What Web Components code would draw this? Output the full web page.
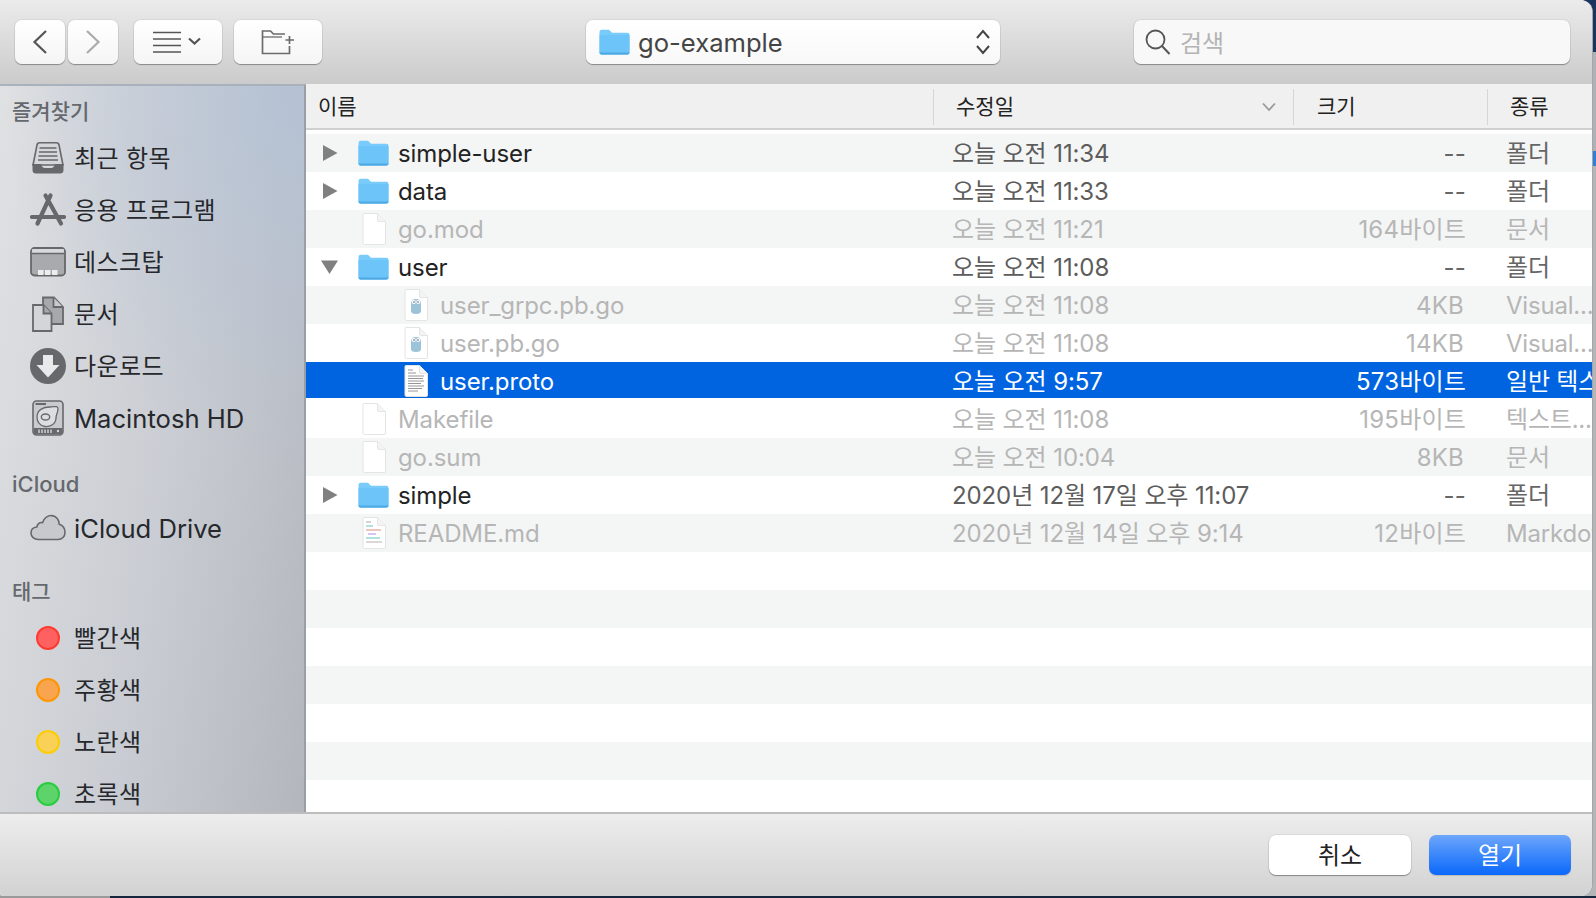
<!DOCTYPE html>
<html lang="ko">
<head>
<meta charset="utf-8">
<title>go-example</title>
<style>
    html, body { margin: 0; height: 100%; overflow: hidden; }
    body {
        font-family: Inter, "Noto Sans CJK KR", sans-serif;
        background:
            linear-gradient(to right, #9a9a9a 110px, #16263d 110px) left bottom / 100% 2px no-repeat,
            linear-gradient(to bottom, #1a3560 52px, #aeb1b5 52px, #aeb1b5 151px, #2f7fd8 151px, #2f7fd8 166px, #b4b5b7 166px);
    }
</style>
</head>
<body>
<file-dialog>
    <dialog-toolbar slot="toolbar"></dialog-toolbar>
    <side-bar slot="side">
        <side-heading style="margin-bottom:6px">즐겨찾기</side-heading>
        <side-item icon="recents">최근 항목</side-item>
        <side-item icon="apps">응용 프로그램</side-item>
        <side-item icon="desktop">데스크탑</side-item>
        <side-item icon="docs">문서</side-item>
        <side-item icon="download">다운로드</side-item>
        <side-item icon="disk" style="font-size:25.6px;letter-spacing:0;--label-pad:0px">Macintosh HD</side-item>
        <side-heading style="margin-top:26px;margin-bottom:5px;font-size:22px">iCloud</side-heading>
        <side-item icon="cloud" style="font-size:25.6px;letter-spacing:0;--label-pad:2px">iCloud Drive</side-item>
        <side-heading style="margin-top:23px;margin-bottom:6px">태그</side-heading>
        <side-item dot="#ff6060" ring="#ff3b30">빨간색</side-item>
        <side-item dot="#f9a54f" ring="#ff9500">주황색</side-item>
        <side-item dot="#f9d157" ring="#ffcc00">노란색</side-item>
        <side-item dot="#5dd36a" ring="#28cd41">초록색</side-item>
    </side-bar>
    <file-list slot="list">
        <file-row arrow="right" icon="folder" date="오늘 오전 11:34" size="--" kind="폴더">simple-user</file-row>
        <file-row arrow="right" icon="folder" date="오늘 오전 11:33" size="--" kind="폴더">data</file-row>
        <file-row dim icon="blank" date="오늘 오전 11:21" size="164바이트" kind="문서">go.mod</file-row>
        <file-row arrow="down" icon="folder" date="오늘 오전 11:08" size="--" kind="폴더">user</file-row>
        <file-row dim level="2" icon="gopher" date="오늘 오전 11:08" size="4KB" kind="Visual...">user_grpc.pb.go</file-row>
        <file-row dim level="2" icon="gopher" date="오늘 오전 11:08" size="14KB" kind="Visual...">user.pb.go</file-row>
        <file-row selected level="2" icon="text" date="오늘 오전 9:57" size="573바이트" kind="일반 텍스트 문서">user.proto</file-row>
        <file-row dim icon="blank" date="오늘 오전 11:08" size="195바이트" kind="텍스트....">Makefile</file-row>
        <file-row dim icon="blank" date="오늘 오전 10:04" size="8KB" kind="문서">go.sum</file-row>
        <file-row arrow="right" icon="folder" date="2020년 12월 17일 오후 11:07" size="--" kind="폴더">simple</file-row>
        <file-row dim icon="readme" date="2020년 12월 14일 오후 9:14" size="12바이트" kind="Markdown">README.md</file-row>
        <file-row></file-row><file-row></file-row><file-row></file-row><file-row></file-row>
        <file-row></file-row><file-row></file-row><file-row></file-row>
    </file-list>
    <dialog-footer slot="footer"></dialog-footer>
</file-dialog>

<script>
const FOLDER_SVG = `
    <svg width="31" height="26" viewBox="0 0 31 26">
        <path d="M.5 3Q.5 .8 2.8 .8H10L13 3.8H28.5Q30.5 3.8 30.5 6V23.5Q30.5 25.6 28.5 25.6H2.5Q.5 25.6 .5 23.5Z" fill="#78cbfa"/>
        <path d="M.5 6H30.5V23.5Q30.5 25.6 28.5 25.6H2.5Q.5 25.6 .5 23.5Z" fill="#6cc4f9"/>
        <path d="M.5 23.6H30.5Q30.5 25.6 28.5 25.6H2.5Q.5 25.6 .5 23.6Z" fill="#4ea8e2"/>
    </svg>`;

// blank page shape, the variants below only add something on top of it
const pageSvg = (inner = '') => `
    <svg width="24" height="32" viewBox="0 0 24 32">
        <path d="M1 1.5Q1 .5 2 .5H15.5L23.5 8.5V30Q23.5 31.5 22 31.5H2.5Q1 31.5 1 30Z" fill="#fff" stroke="#e4e4e4"/>
        <path d="M15.5 .5V7Q15.5 8.5 17 8.5H23.5" fill="#f4f4f4" stroke="#e4e4e4"/>
        ${inner}
    </svg>`;

const FILE_ICONS = {
    folder: FOLDER_SVG,
    blank: pageSvg(),
    gopher: pageSvg(`
        <path d="M7 15Q7 10 12 10Q17 10 17 15V22Q17 25 12 25Q7 25 7 22Z" fill="#9cc3d8"/>
        <circle cx="9.8" cy="13" r="2" fill="#fff"/><circle cx="14.2" cy="13" r="2" fill="#fff"/>
        <circle cx="10" cy="13" r=".8" fill="#456"/><circle cx="14" cy="13" r=".8" fill="#456"/>`),
    text: pageSvg(`
        <g stroke="#8a8a8a" stroke-width=".9">
            <path d="M4 5H9M4 8H12M4 11H20M4 13.5H19M4 16H20M4 18.5H17M4 21H20M4 23.5H18M4 26H14"/>
        </g>`),
    readme: pageSvg(`
        <g stroke-width="1.6">
            <path d="M4 5H9" stroke="#c9c9c9"/><path d="M4 9H11" stroke="#9fd9d6"/>
            <path d="M4 13H19" stroke="#eab5b0"/><path d="M6 17H14" stroke="#cdb5ef"/>
            <path d="M4 21H18" stroke="#9fd9d6"/><path d="M4 25H20" stroke="#d0d0d0"/>
        </g>`)
};

const SIDE_ICONS = {
    recents: `
        <path d="M3 25L7 5Q7.4 2.8 9.5 2.8H26.5Q28.6 2.8 29 5L33 25Z" fill="#d4d6da" stroke="#66686c" stroke-width="1.6"/>
        <path d="M9.5 8H26.5M9 12H27M8.5 16H27.5M8 20H28" stroke="#66686c" stroke-width="1.5"/>
        <path d="M2.5 24H11Q12 28 15 28H21Q24 28 25 24H33.5V30Q33.5 33.5 30 33.5H6Q2.5 33.5 2.5 30Z" fill="#66686c"/>`,
    apps: `
        <g stroke="#66686c" stroke-linecap="round" fill="none">
            <path d="M20.5 3.5L7.5 31.5M15.5 3.5L31 31.5" stroke-width="4.2"/>
            <path d="M2 25H34" stroke-width="4.2"/>
        </g>`,
    desktop: `
        <rect x="1" y="4" width="34" height="27.5" rx="3.5" fill="#a8aaae" stroke="#66686c" stroke-width="1.8"/>
        <path d="M2 5.5Q2 5 3 5H33Q34 5 34 5.5V9H2Z" fill="#d8d9dc"/>
        <path d="M1.5 9.5H34.5" stroke="#66686c" stroke-width="1.5"/>
        <path d="M8 26H13.5V31H8ZM15 26H20.5V31H15ZM22 26H27.5V31H22Z" fill="#eceded"/>`,
    docs: `
        <path d="M13 1.5H24L33 11V28H18V18H13Z" fill="#a6a8ac" stroke="#66686c" stroke-width="1.8"/>
        <path d="M23.5 1.5V11H33" fill="#c9cacd" stroke="#66686c" stroke-width="1.8"/>
        <path d="M3 9H13.5L21.5 17.5V35H3Z" fill="#d4d5d8" stroke="#66686c" stroke-width="1.8"/>
        <path d="M13.5 9V17.5H21.5" fill="#a6a8ac" stroke="#66686c" stroke-width="1.8"/>`,
    download: `
        <circle cx="18" cy="18" r="18" fill="#66686c"/>
        <path d="M13 7H23V17H29.5L18 29.5L6.5 17H13Z" fill="#e8e9ea"/>`,
    disk: `
        <rect x="3" y="1" width="30" height="34" rx="3.5" fill="#c8cace" stroke="#66686c" stroke-width="1.6"/>
        <path d="M5.5 4H16" stroke="#66686c" stroke-width="2"/>
        <path d="M7 17C7 10 13 7 20 7C24 7 28 5 28 9C28 13 26 14 26 18C26 24 20 27 15 26.5C10 26 7 22 7 17Z" fill="#dcdde0" stroke="#66686c" stroke-width="1.3"/>
        <ellipse cx="15.5" cy="17" rx="4.2" ry="3" fill="none" stroke="#66686c" stroke-width="1.4"/>
        <path d="M3.8 28H32.2V32Q32.2 34.2 30 34.2H6Q3.8 34.2 3.8 32Z" fill="#66686c"/>
        <path d="M9 29.5V33M12 29.5V33M15 29.5V33M18 29.5V33M21 29.5V33" stroke="#d6d7da" stroke-width="1.4"/>
        <circle cx="28" cy="31" r="1.2" fill="#d6d7da"/>`,
    cloud: `
        <path d="M8.5 28.5C4 28.5 1 25.5 1 22C1 18.5 3.6 16.3 6.8 16C7.5 13 10 11.3 12.6 11.6C14.2 7 18 4.2 22 4.6C26.4 5 29.2 8.8 29.2 13.2C32.8 14.4 35 17.6 35 21.4C35 25.5 32 28.5 28 28.5Z" fill="#c7c9cd" stroke="#66686c" stroke-width="1.6"/>`
};

class FileDialog extends HTMLElement {
    constructor() {
        super();
        this.attachShadow({mode: 'open'});
        this.shadowRoot.innerHTML = `
            <style>
                :host {
                    display: flex;
                    flex-direction: column;
                    width: 1592px;
                    height: 896px;
                    border-radius: 0 12px 12px 4px;
                    overflow: hidden;
                    box-shadow: 1px 0 0 #a6a6a6;
                    background: #fff;
                }
                .main { display: flex; height: 728px; flex: none; overflow: hidden; }
            </style>
            <slot name="toolbar"></slot>
            <div class="main">
                <slot name="side"></slot>
                <slot name="list"></slot>
            </div>
            <slot name="footer"></slot>
        `;
    }
}

class DialogToolbar extends HTMLElement {
    constructor() {
        super();
        this.attachShadow({mode: 'open'});
        this.shadowRoot.innerHTML = `
            <style>
                :host {
                    display: flex;
                    align-items: center;
                    height: 84px;
                    flex: none;
                    box-sizing: border-box;
                    padding: 0 22px 0 15px;
                    background: linear-gradient(#ebebeb, #cbcbcb);
                }
                .btn {
                    display: flex;
                    align-items: center;
                    justify-content: center;
                    height: 44px;
                    flex: none;
                    box-sizing: border-box;
                    background: linear-gradient(#fff, #f5f5f5);
                    border-radius: 7px;
                    box-shadow: 0 0 0 1px rgba(0,0,0,0.05), 0 1px 1px rgba(0,0,0,0.32);
                }
                .path {
                    width: 414px;
                    margin-left: 264px;
                    justify-content: flex-start;
                    padding: 0 8px 0 13px;
                    font-size: 25.6px;
                    color: #444;
                    background: linear-gradient(#fff, #f8f8f8);
                }
                .path span { margin-left: 8px; flex: 1; }
                .search {
                    width: 436px;
                    margin-left: 134px;
                    justify-content: flex-start;
                    padding-left: 10px;
                    font-size: 24px;
                    color: #b4b4b4;
                    background: #f8f8f8;
                }
                .search span { margin-left: 8px; padding-bottom: 2px; }
            </style>
            <div class="btn" style="width:50px">
                <svg width="16" height="26" viewBox="0 0 16 26"><path d="M14 2L2.5 13L14 24" fill="none" stroke="#555" stroke-width="2.2"/></svg>
            </div>
            <div class="btn" style="width:50px;margin-left:3px">
                <svg width="16" height="26" viewBox="0 0 16 26"><path d="M2 2L13.5 13L2 24" fill="none" stroke="#ababab" stroke-width="2.2"/></svg>
            </div>
            <div class="btn" style="width:88px;margin-left:16px">
                <svg width="50" height="24" viewBox="0 0 50 24">
                    <path d="M0 2.5H28M0 9H28M0 15.5H28M0 22H28" stroke="#555" stroke-width="1.6"/>
                    <path d="M36 8.5L41.5 13.5L47 8.5" fill="none" stroke="#555" stroke-width="2.2"/>
                </svg>
            </div>
            <div class="btn" style="width:88px;margin-left:12px">
                <svg width="34" height="26" viewBox="0 0 34 26">
                    <path d="M28.5 17V24.5H1.5V2H9.5L12.5 5H24" fill="none" stroke="#6b6b6b" stroke-width="1.7"/>
                    <path d="M1.5 8H21" stroke="#6b6b6b" stroke-width="1.3"/>
                    <path d="M28.5 7V15M24.5 11H33" stroke="#6b6b6b" stroke-width="1.7"/>
                </svg>
            </div>
            <div class="btn path">
                ${FOLDER_SVG}
                <span>go-example</span>
                <svg width="18" height="26" viewBox="0 0 18 26"><path d="M3 9L9 2L15 9M3 17L9 24L15 17" fill="none" stroke="#444" stroke-width="2"/></svg>
            </div>
            <div class="btn search">
                <svg width="28" height="26" viewBox="0 0 28 26">
                    <circle cx="11.5" cy="10.5" r="9" fill="none" stroke="#555" stroke-width="1.8"/>
                    <path d="M18 17L25.5 25" stroke="#555" stroke-width="2"/>
                </svg>
                <span>검색</span>
            </div>
        `;
    }
}

class SideBar extends HTMLElement {
    constructor() {
        super();
        this.attachShadow({mode: 'open'});
        this.shadowRoot.innerHTML = `
            <style>
                :host {
                    display: block;
                    width: 306px;
                    flex: none;
                    box-sizing: border-box;
                    padding-top: 12px;
                    border-top: 2px solid #a9b1bd;
                    border-right: 2px solid #9a9ea6;
                    overflow: hidden;
                    background:
                        radial-gradient(ellipse 300px 380px at 100% 0, rgba(176,192,214,0.75), rgba(176,192,214,0)),
                        linear-gradient(100deg, #e0e1e3 0%, #c9ccd2 55%, #b3b6bd 100%);
                }
            </style>
            <slot></slot>
        `;
    }
}

class SideHeading extends HTMLElement {
    constructor() {
        super();
        this.attachShadow({mode: 'open'});
        this.shadowRoot.innerHTML = `
            <style>
                :host {
                    display: block;
                    height: 28px;
                    line-height: 28px;
                    margin-bottom: 4px;
                    padding-left: 12px;
                    font-size: 21px;
                    font-weight: 500;
                    color: #65686d;
                }
            </style>
            <slot></slot>
        `;
    }
}

class SideItem extends HTMLElement {
    constructor() {
        super();
        this.attachShadow({mode: 'open'});
    }

    connectedCallback() {
        let icon = '';
        if (this.hasAttribute('dot')) {
            icon = `<span class="dot" style="background:${this.getAttribute('dot')};border-color:${this.getAttribute('ring')}"></span>`;
        } else {
            icon = `<svg width="36" height="36" viewBox="0 0 36 36">${SIDE_ICONS[this.getAttribute('icon')]}</svg>`;
        }
        this.shadowRoot.innerHTML = `
            <style>
                :host {
                    display: flex;
                    align-items: center;
                    height: 52px;
                    padding-left: 30px;
                    font-size: 24px;
                    letter-spacing: 0.4px;
                    color: #26282c;
                    white-space: nowrap;
                }
                .icon { display: flex; align-items: center; justify-content: center; width: 36px; height: 36px; margin-right: 8px; }
                .dot { width: 24px; height: 24px; box-sizing: border-box; border: 2px solid; border-radius: 50%; }
                .label { padding-bottom: var(--label-pad, 3px); }
            </style>
            <span class="icon">${icon}</span>
            <span class="label"><slot></slot></span>
        `;
    }
}

class FileList extends HTMLElement {
    constructor() {
        super();
        this.attachShadow({mode: 'open'});
        this.shadowRoot.innerHTML = `
            <style>
                :host { display: block; flex: 1; min-width: 0; overflow: hidden; background: #fff; }
                .head {
                    display: grid;
                    grid-template-columns: 627px 360px 194px 1fr;
                    align-items: center;
                    height: 42px;
                    padding-top: 2px;
                    margin-bottom: 4px;
                    background: #f0f0f0;
                    border-bottom: 2px solid #d0d0d0;
                    font-size: 21px;
                    color: #222;
                    box-sizing: content-box;
                }
                .head div { display: flex; align-items: center; justify-content: space-between; height: 36px; box-sizing: border-box; padding-bottom: 5px; }
                .head div + div { border-left: 1px solid #d6d6d6; }
                .name { padding-left: 12px; }
                .date { padding: 0 17px 0 22px; }
                .date svg { margin-top: 5px; }
                .size { padding-left: 23px; }
                .kind { padding-left: 22px; }
            </style>
            <div class="head">
                <div class="name">이름</div>
                <div class="date">수정일
                    <svg width="14" height="10" viewBox="0 0 14 10"><path d="M1 1.5L7 8L13 1.5" fill="none" stroke="#999" stroke-width="1.8"/></svg>
                </div>
                <div class="size">크기</div>
                <div class="kind">종류</div>
            </div>
            <slot></slot>
        `;
    }
}

// text with hangul sits lower because of the fallback font metrics, so it gets lifted
const liftFor = text => /[가-힣]/.test(text) ? 3 : 0;

class FileRow extends HTMLElement {
    constructor() {
        super();
        this.attachShadow({mode: 'open'});
    }

    connectedCallback() {
        const arrow = this.getAttribute('arrow');
        let arrowSvg = '';
        if (arrow === 'right') {
            arrowSvg = '<svg width="16" height="18" viewBox="0 0 16 18"><path d="M1 1L15.5 9L1 17Z" fill="#808080"/></svg>';
        } else if (arrow === 'down') {
            arrowSvg = '<svg width="18" height="16" viewBox="0 0 18 16" style="margin-left:-1px"><path d="M0 1H18L9 15.5Z" fill="#808080"/></svg>';
        }
        const icon = FILE_ICONS[this.getAttribute('icon')] || '';
        const indent = this.getAttribute('level') === '2' ? 42 : 0;
        const date = this.getAttribute('date') || '';
        const size = this.getAttribute('size') || '';
        const kind = this.getAttribute('kind') || '';
        // KB sizes sit a bit left of the byte ones in the reference
        const sizePad = size.endsWith('KB') ? 23 : 21;
        this.shadowRoot.innerHTML = `
            <style>
                :host {
                    display: grid;
                    grid-template-columns: 627px 360px 194px 1fr;
                    align-items: center;
                    height: 38px;
                    font-size: 24px;
                    color: #232323;
                    white-space: nowrap;
                    background: #fff;
                }
                :host(:nth-child(odd)) { background: #f4f5f5; }
                :host([selected]) { background: linear-gradient(#0064e1 36px, #fff 36px); color: #fff; }
                :host([dim]) { color: #b6b6b6; }
                .name { display: flex; align-items: center; padding-left: 16px; letter-spacing: -0.1px; }
                .arrow { display: flex; width: 16px; height: 20px; align-items: center; margin-right: 20px; flex: none; }
                .icon { display: flex; justify-content: center; width: 31px; margin-right: 9px; flex: none; }
                .date { padding-left: 19px; color: #5c5c5c; letter-spacing: -0.1px; }
                .size { text-align: right; color: #666; letter-spacing: 0.2px; }
                .kind { padding-left: 19px; overflow: hidden; color: #666; letter-spacing: -0.2px; }
                :host([dim]) .date, :host([dim]) .size, :host([dim]) .kind { color: #b6b6b6; }
                :host([selected]) .date, :host([selected]) .size, :host([selected]) .kind { color: #fff; }
            </style>
            <div class="name">
                <span class="arrow">${arrowSvg}</span>
                <span class="icon" style="margin-left:${indent}px">${icon}</span>
                <slot></slot>
            </div>
            <div class="date" style="padding-bottom:${liftFor(date)}px">${date}</div>
            <div class="size" style="padding-right:${sizePad}px;padding-bottom:${liftFor(size)}px">${size}</div>
            <div class="kind" style="padding-bottom:${liftFor(kind)}px">${kind}</div>
        `;
    }
}

class DialogFooter extends HTMLElement {
    constructor() {
        super();
        this.attachShadow({mode: 'open'});
        this.shadowRoot.innerHTML = `
            <style>
                :host {
                    display: flex;
                    justify-content: flex-end;
                    align-items: flex-start;
                    gap: 18px;
                    flex: 1;
                    box-sizing: border-box;
                    padding: 21px 21px 0 0;
                    border-top: 2px solid #bdbdbd;
                    background: linear-gradient(#ededed, #d2d2d2);
                }
                button {
                    width: 142px;
                    height: 40px;
                    padding: 0 0 4px;
                    border: 0;
                    border-radius: 7px;
                    font: 24px Inter, "Noto Sans CJK KR", sans-serif;
                    color: #222;
                    background: #fff;
                    box-shadow: 0 0 0 .5px rgba(0,0,0,0.12), 0 1px 1px rgba(0,0,0,0.35);
                }
                .primary {
                    color: #fff;
                    background: linear-gradient(#6da6fb, #0a68fb);
                    box-shadow: 0 1px 1px rgba(0,0,0,0.15);
                }
            </style>
            <button>취소</button>
            <button class="primary">열기</button>
        `;
    }
}

customElements.define('file-dialog', FileDialog);
customElements.define('dialog-toolbar', DialogToolbar);
customElements.define('side-bar', SideBar);
customElements.define('side-heading', SideHeading);
customElements.define('side-item', SideItem);
customElements.define('file-list', FileList);
customElements.define('file-row', FileRow);
customElements.define('dialog-footer', DialogFooter);
</script>
</body>
</html>
